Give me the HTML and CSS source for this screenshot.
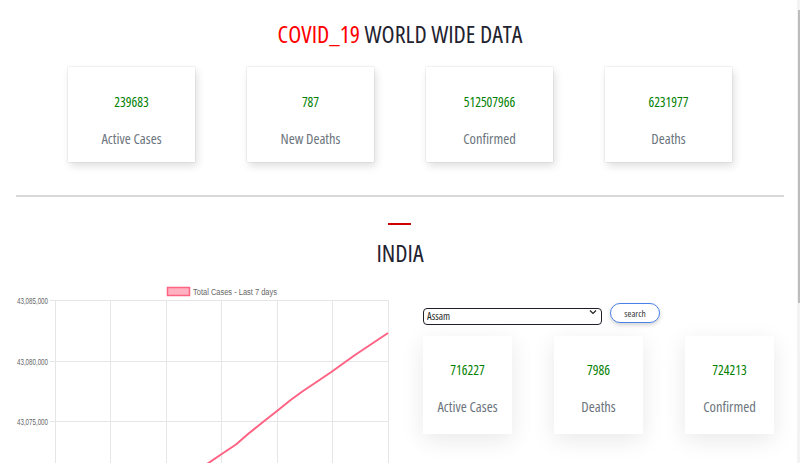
FILE: index.html
```html
<!DOCTYPE html>
<html>
<head>
<meta charset="utf-8">
<title>COVID_19 World Wide Data</title>
<link rel="stylesheet" href="styles.css">
</head>
<body>
<main class="page">
  <h1 class="title"><span class="red">COVID_19</span> WORLD WIDE DATA</h1>

  <section class="world-cards">
    <div class="card">
      <div class="num">239683</div>
      <div class="label">Active Cases</div>
    </div>
    <div class="card">
      <div class="num">787</div>
      <div class="label">New Deaths</div>
    </div>
    <div class="card">
      <div class="num">512507966</div>
      <div class="label">Confirmed</div>
    </div>
    <div class="card">
      <div class="num">6231977</div>
      <div class="label">Deaths</div>
    </div>
  </section>

  <hr class="divider">

  <div class="red-bar"></div>
  <h2 class="country">INDIA</h2>

  <section class="india">
    <svg class="chart" width="400" height="183" viewBox="0 0 400 183">
      <g stroke="#e6e6e6" stroke-width="1">
        <line x1="50" y1="20.5" x2="388" y2="20.5"/>
        <line x1="50" y1="81.5" x2="388" y2="81.5"/>
        <line x1="50" y1="141.5" x2="388" y2="141.5"/>
        <line x1="55.5" y1="20" x2="55.5" y2="183"/>
        <line x1="110.5" y1="20" x2="110.5" y2="183"/>
        <line x1="166.5" y1="20" x2="166.5" y2="183"/>
        <line x1="221.5" y1="20" x2="221.5" y2="183"/>
        <line x1="277.5" y1="20" x2="277.5" y2="183"/>
        <line x1="332.5" y1="20" x2="332.5" y2="183"/>
        <line x1="388.5" y1="20" x2="388.5" y2="183"/>
      </g>
      <rect x="167.5" y="7.5" width="22" height="8" fill="rgba(255,99,132,0.5)" stroke="#ff6384" stroke-width="1.5"/>
      <text class="chart-text" x="193" y="15" textLength="84" lengthAdjust="spacingAndGlyphs">Total Cases - Last 7 days</text>
      <text class="chart-text" x="17" y="23.5" textLength="31" lengthAdjust="spacingAndGlyphs">43,085,000</text>
      <text class="chart-text" x="17" y="84.5" textLength="31" lengthAdjust="spacingAndGlyphs">43,080,000</text>
      <text class="chart-text" x="17" y="144.5" textLength="31" lengthAdjust="spacingAndGlyphs">43,075,000</text>
      <polyline fill="none" stroke="#ff6384" stroke-width="2" stroke-linejoin="round"
        points="207,184 221,174.5 236,164.5 248,154 263,142 277,131 290,120.5 303,111 318,101 332,91.5 355,75 388,53"/>
    </svg>

    <div class="state-panel">
      <div class="controls">
        <div class="select-wrap">
          <select class="state-select">
            <option>Assam</option>
          </select>
          <svg class="chevron" width="8" height="6" viewBox="0 0 8 6"><path d="M1 1.5 L4 4.5 L7 1.5" fill="none" stroke="#222" stroke-width="1.2"/></svg>
        </div>
        <button class="search-btn">search</button>
      </div>
      <div class="state-cards">
        <div class="s-card">
          <div class="num">716227</div>
          <div class="label">Active Cases</div>
        </div>
        <div class="s-card">
          <div class="num">7986</div>
          <div class="label">Deaths</div>
        </div>
        <div class="s-card">
          <div class="num">724213</div>
          <div class="label">Confirmed</div>
        </div>
      </div>
    </div>
  </section>
</main>
<div class="scrollbar"><div class="thumb"></div></div>
</body>
</html>
```
FILE: styles.css
```css
html, body {
  margin: 0;
  padding: 0;
  background: #ffffff;
  overflow: hidden;
}

body {
  font-family: "Open Sans", "Noto Sans", sans-serif;
  font-stretch: 75%;
  color: #1f2330;
}

.page {
  display: flex;
  flex-direction: column;
}

.title {
  margin: 0;
  padding-top: 18px;
  font-size: 24px;
  line-height: 32px;
  font-weight: 400;
  text-align: center;
}

.red {
  color: #ff0000;
}

.world-cards {
  display: flex;
  justify-content: center;
  gap: 52px;
  margin-top: 17px;
}

.card {
  width: 127px;
  height: 95px;
  box-sizing: border-box;
  padding-top: 26px;
  background: #fff;
  text-align: center;
  box-shadow: 2px 4px 8px rgba(0, 0, 0, 0.13), 0 0 1px rgba(0, 0, 0, 0.25);
}

.num {
  font-size: 13.5px;
  line-height: 18px;
  color: #008000;
}

.label {
  margin-top: 18px;
  font-size: 14.5px;
  line-height: 20px;
  color: #6c757d;
}

.divider {
  margin: 33px 16px 0 16px;
  border: 0;
  border-top: 2px solid #d9d9d9;
  height: 0;
}

.red-bar {
  align-self: center;
  width: 23px;
  height: 2px;
  margin-top: 26px;
  margin-left: -1px;
  background: #cc0000;
}

.country {
  margin: 12px 0 0 0;
  font-size: 24px;
  line-height: 32px;
  font-weight: 400;
  text-align: center;
}

.india {
  display: flex;
  margin-top: 11px;
}

.chart {
  display: block;
  flex: none;
}

.chart-text {
  font-family: "Liberation Sans", sans-serif;
  font-size: 8.5px;
  fill: #666666;
}

.state-panel {
  margin-left: 23px;
  padding-top: 23px;
  display: flex;
  flex-direction: column;
}

.controls {
  display: flex;
  gap: 8px;
  align-items: flex-start;
}

.select-wrap {
  position: relative;
  width: 179px;
  height: 17px;
}

.state-select {
  appearance: none;
  -webkit-appearance: none;
  width: 179px;
  height: 17px;
  box-sizing: border-box;
  margin: 0;
  padding: 0 0 0 3px;
  border: 1px solid #1f1f2b;
  border-radius: 4px;
  background: #fff;
  font-family: "Open Sans", sans-serif;
  font-stretch: 75%;
  font-size: 10.5px;
  font-weight: 400;
  line-height: 15px;
  color: #2a2a2a;
}

.chevron {
  position: absolute;
  right: 5px;
  top: 6px;
}

.search-btn {
  width: 50px;
  height: 20px;
  box-sizing: border-box;
  margin: 0;
  padding: 0;
  border: 1.5px solid #4a83e6;
  border-radius: 10px;
  background: #fff;
  box-shadow: 0 2px 4px rgba(0, 0, 0, 0.18);
  font-family: "Open Sans", sans-serif;
  font-stretch: 75%;
  font-size: 9.5px;
  color: #333;
}

.state-cards {
  display: flex;
  gap: 42px;
  margin-top: 13px;
}

.s-card {
  width: 89px;
  height: 98px;
  box-sizing: border-box;
  padding-top: 25px;
  background: #fff;
  text-align: center;
  box-shadow: 0 6px 22px rgba(0, 0, 0, 0.09);
}

.scrollbar {
  position: fixed;
  top: 0;
  right: 0;
  width: 3px;
  height: 100%;
  background: #f3f3f3;
}

.thumb {
  margin-top: 10px;
  margin-left: 1px;
  width: 2px;
  height: 293px;
  background: #bdbdbd;
}
```
